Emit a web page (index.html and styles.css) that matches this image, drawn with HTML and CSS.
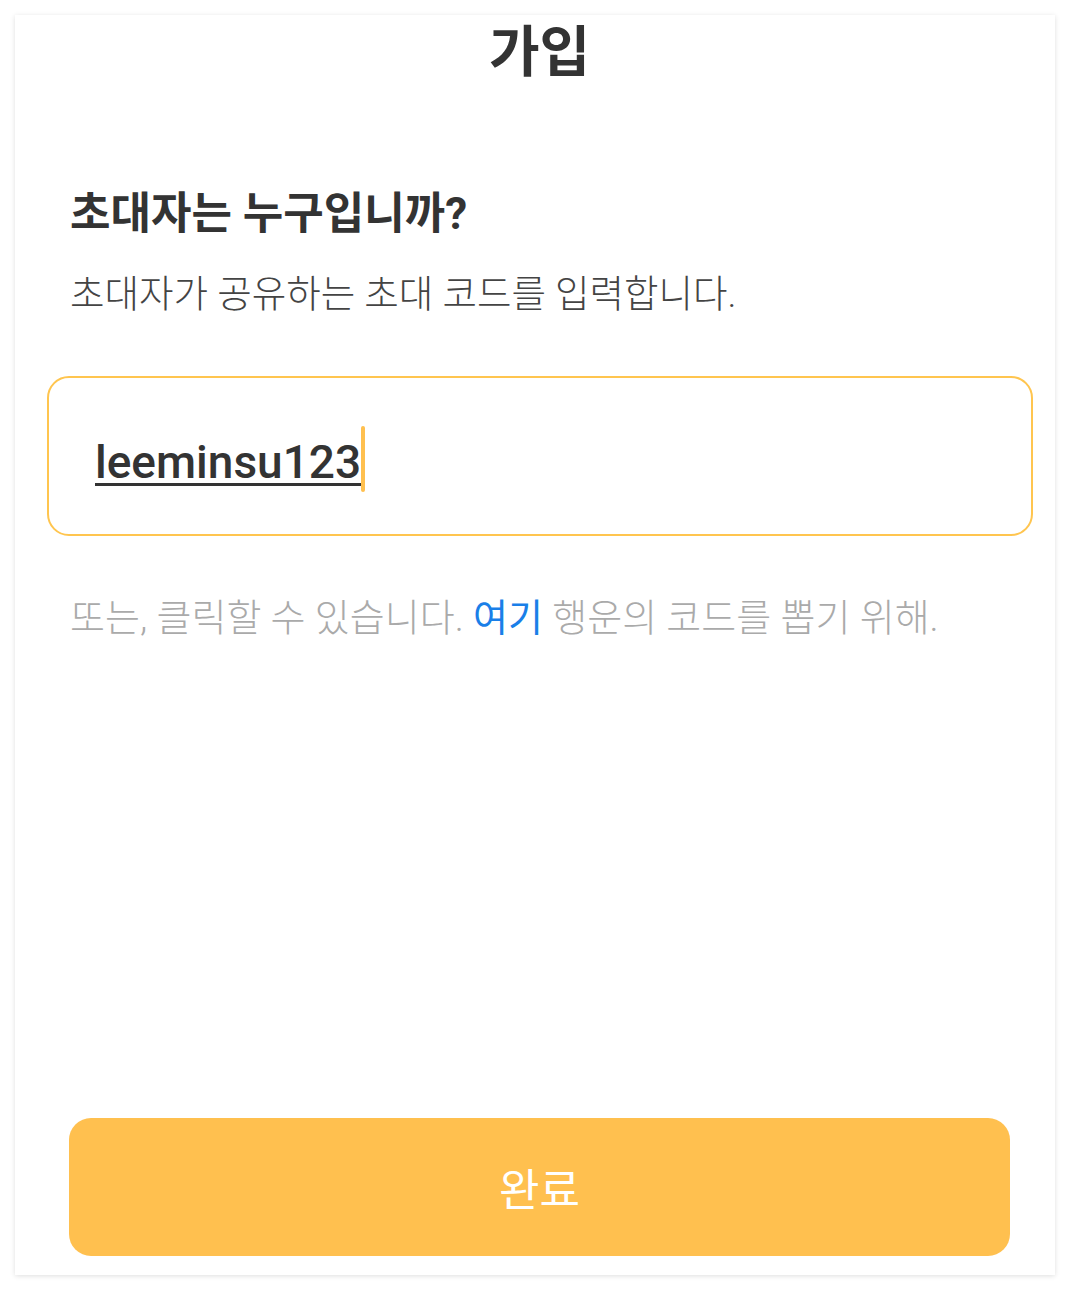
FILE: index.html
```html
<!DOCTYPE html>
<html lang="ko">

<head>
    <meta charset="UTF-8">
    <meta name="viewport" content="width=device-width, initial-scale=1.0">
    <title>가입</title>
    <link rel="stylesheet" href="styles.css">
</head>

<body>
    <!-- 가입 카드 -->
    <div class="card">
        <h1 class="title">가입</h1>
        <div class="content">
            <h2 class="question">초대자는 누구입니까?</h2>
            <p class="desc">초대자가 공유하는 초대 코드를 입력합니다.</p>
            <!-- 입력창 -->
            <div class="input-box">
                <span class="code">leeminsu123</span><span class="caret"></span>
            </div>
            <p class="hint">또는, 클릭할 수 있습니다. <a href="#" class="link">여기</a> 행운의 코드를 뽑기 위해.</p>
        </div>
        <div class="bottom">
            <button class="btn">완료</button>
        </div>
    </div>
</body>

</html>
```

FILE: styles.css
```css
* {
    margin: 0;
    padding: 0;
    box-sizing: border-box;
}

body {
    background-color: #fff;
    font-family: Roboto, "Noto Sans CJK KR", sans-serif;
    padding: 15px;
}

/* 흰색 카드 */
.card {
    display: flex;
    flex-direction: column;
    width: 1040px;
    height: 1260px;
    background-color: #fff;
    box-shadow: 0 1px 5px rgba(0, 0, 0, .13);
}

.title {
    text-align: center;
    font-size: 55px;
    font-weight: 700;
    color: #333;
    line-height: 70px;
    margin-top: 2px;
    padding-left: 9px;
}

.content {
    flex: 1;
    padding: 0 22px 0 32px;
}

.question {
    margin: 99px 0 0 23px;
    font-size: 44px;
    font-weight: 700;
    color: #333;
    line-height: 56px;
}

.desc {
    margin: 27px 0 0 23px;
    font-size: 37.5px;
    font-weight: 300;
    color: #444;
    line-height: 50px;
}

/* 입력창 테두리 */
.input-box {
    display: flex;
    align-items: center;
    height: 160px;
    margin-top: 57px;
    padding: 12px 0 0 46px;
    border: 2px solid #ffc54f;
    border-radius: 22px;
}

.code {
    font-size: 46px;
    font-weight: 500;
    color: #333;
    text-decoration: underline;
    text-decoration-thickness: 3px;
    text-underline-offset: 5px;
}

.caret {
    width: 4px;
    height: 66px;
    margin: -6px 0 0 0;
    background-color: #ffc04f;
    border-radius: 2px;
}

.hint {
    margin: 57px 0 0 23px;
    font-size: 38px;
    font-weight: 300;
    color: #aaa;
    line-height: 50px;
}

.link {
    color: #1a7fe8;
    font-weight: 400;
    text-decoration: none;
}

.bottom {
    padding: 0 45px 19px 54px;
}

.btn {
    display: block;
    width: 100%;
    height: 138px;
    border: 0;
    border-radius: 22px;
    background-color: #ffc04f;
    color: #fff;
    font-family: "Noto Sans CJK KR", sans-serif;
    font-size: 44px;
}
```
